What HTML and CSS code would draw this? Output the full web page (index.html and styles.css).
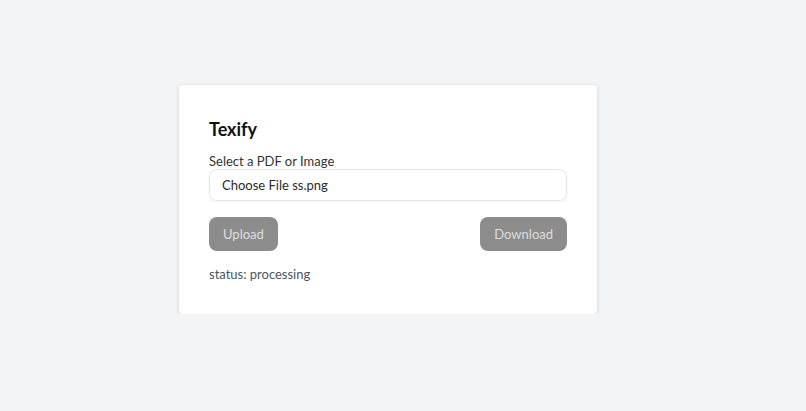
FILE: index.html
```html
<!DOCTYPE html>
<html lang="en">
<head>
<meta charset="utf-8">
<title>Texify</title>
<link rel="stylesheet" href="styles.css">
</head>
<body>
<main class="page">
  <section class="card">
    <h1 class="title">Texify</h1>
    <label class="label" for="file">Select a PDF or Image</label>
    <div class="file-input" id="file">Choose File ss.png</div>
    <div class="actions">
      <button class="btn">Upload</button>
      <button class="btn">Download</button>
    </div>
    <p class="status">status: processing</p>
  </section>
</main>
</body>
</html>
```
FILE: styles.css
```css
html, body {
  margin: 0;
  padding: 0;
  background: #f3f4f6;
  font-family: "Lato", "Open Sans", sans-serif;
}
.page {
  padding: 85px 0 0 179px;
}
.card {
  box-sizing: border-box;
  width: 418px;
  background: #ffffff;
  border-radius: 4px;
  box-shadow: 0 1px 4px rgba(0, 0, 0, 0.14);
  padding: 32px 30px 30px 30px;
  display: flex;
  flex-direction: column;
}
.title {
  margin: 0 0 12px 0;
  font-size: 18px;
  line-height: 24px;
  font-weight: 700;
  color: #111111;
}
.label {
  display: block;
  font-size: 13px;
  line-height: 16px;
  color: #333333;
}
.file-input {
  box-sizing: border-box;
  height: 32px;
  border: 1px solid #e3e5e8;
  border-radius: 8px;
  box-shadow: 0 1px 2px rgba(0, 0, 0, 0.05);
  padding: 0 12px;
  display: flex;
  align-items: center;
  font-size: 13px;
  color: #2b2b2b;
}
.actions {
  margin-top: 16px;
  display: flex;
  justify-content: space-between;
}
.btn {
  height: 34px;
  padding: 0 14px;
  border: none;
  border-radius: 8px;
  background: #8c8c8c;
  color: #dedede;
  font-family: inherit;
  font-size: 13px;
}
.status {
  margin: 13px 0 0 0;
  font-size: 13px;
  line-height: 20px;
  color: #4b5563;
}
```
